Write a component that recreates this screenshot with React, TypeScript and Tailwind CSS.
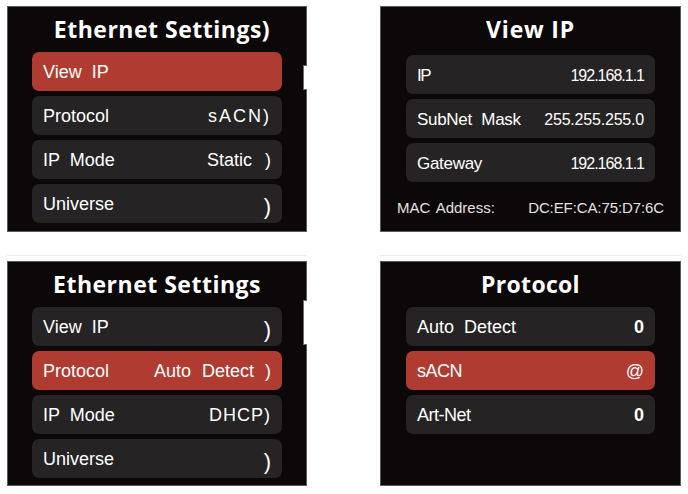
const sans = "font-['Liberation_Sans',Arial,sans-serif]";
const title = "font-['Open_Sans',sans-serif] font-bold text-white text-[23px] leading-[30px] text-center";

function Notch({ top, height }: { top: string; height: string }) {
  return (
    <div
      className={`absolute right-[-1px] w-[4px] bg-white border-l border-t border-b border-[#6d6d6d] ${top} ${height}`}
    />
  );
}

function Paren() {
  return <span className="text-[22px] leading-none inline-block translate-y-[4px]">)</span>;
}

function Row({
  label,
  value,
  active = false,
  className = "",
}: {
  label: React.ReactNode;
  value?: React.ReactNode;
  active?: boolean;
  className?: string;
}) {
  return (
    <div
      className={`h-[39px] rounded-[7px] flex items-center justify-between px-[11px] pt-[2px] text-white ${
        active ? "bg-[#b03b30]" : "bg-[#252324]"
      } ${className}`}
    >
      <span className="[word-spacing:5px]">{label}</span>
      <span>{value}</span>
    </div>
  );
}

function Panel({ children, className = "" }: { children: React.ReactNode; className?: string }) {
  return (
    <div className={`relative bg-[#0c0708] border border-[#5e5a5a] flex flex-col ${className}`}>
      {children}
    </div>
  );
}

export default function App() {
  return (
    <div className={`w-[688px] h-[494px] bg-white pt-[6px] pl-[7px] ${sans}`}>
      <div className="flex gap-x-[73px]">
        <Panel className="w-[300px] h-[226px]">
          <div className={`${title} mt-[7px] pl-[10px] tracking-[0.5px]`}>Ethernet Settings)</div>
          <div className="mt-[8px] px-[24px] flex flex-col gap-[5px] text-[18px]">
            <Row label="View IP" active />
            <Row label="Protocol" value={<span className="tracking-[2px]">sACN)</span>} />
            <Row label="IP Mode" value={<span className="[word-spacing:8px]">Static )</span>} />
            <Row label="Universe" value={<Paren />} />
          </div>
          <Notch top="top-[58px]" height="h-[25px]" />
        </Panel>

        <Panel className="w-[301px] h-[226px]">
          <div className={`${title} mt-[7px] tracking-[0.8px]`}>View IP</div>
          <div className="mt-[11px] px-[25px] flex flex-col gap-[5px] text-[17px] tracking-[-0.3px]">
            <Row label={<span className="tracking-[-1.5px]">IP</span>} value={<span className="text-[16px] tracking-[-1px]">192.168.1.1</span>} className="px-[10px]" />
            <Row label="SubNet Mask" value={<span className="text-[16px] tracking-[-0.2px]">255.255.255.0</span>} className="px-[10px]" />
            <Row label="Gateway" value={<span className="text-[16px] tracking-[-1px]">192.168.1.1</span>} className="px-[10px]" />
          </div>
          <div className="mt-[16px] px-[16px] flex justify-between text-[15px] leading-[20px] text-[#e4e2e2]">
            <span className="[word-spacing:2px]">MAC Address:</span>
            <span className="tracking-[-0.1px]">DC:EF:CA:75:D7:6C</span>
          </div>
        </Panel>
      </div>

      <div className="mt-[23px] flex gap-x-[73px]">
        <div className="w-[300px] border-t border-[#f1ecec] pt-[5px]">
          <Panel className="w-[300px] h-[225px]">
            <div className={`${title} mt-[7px] tracking-[0.5px]`}>Ethernet Settings</div>
            <div className="mt-[8px] px-[24px] flex flex-col gap-[5px] text-[18px]">
              <Row label="View IP" value={<Paren />} />
              <Row label="Protocol" value={<span className="[word-spacing:6px]">Auto Detect )</span>} active />
              <Row label="IP Mode" value={<span className="tracking-[1px]">DHCP)</span>} />
              <Row label="Universe" value={<Paren />} />
            </div>
            <Notch top="top-[38px]" height="h-[45px]" />
          </Panel>
        </div>

        <div className="w-[301px] border-t border-[#f1ecec] pt-[5px]">
          <Panel className="w-[301px] h-[225px]">
            <div className={`${title} mt-[7px] tracking-[0.3px]`}>Protocol</div>
            <div className="mt-[8px] px-[25px] flex flex-col gap-[5px] text-[18px]">
              <Row label="Auto Detect" value={<span className="font-bold">0</span>} className="px-[10px]" />
              <Row label={<span className="tracking-[-0.5px]">sACN</span>} value="@" active className="px-[10px]" />
              <Row label={<span className="tracking-[-0.5px]">Art-Net</span>} value={<span className="font-bold">0</span>} className="px-[10px]" />
            </div>
          </Panel>
        </div>
      </div>
    </div>
  );
}
